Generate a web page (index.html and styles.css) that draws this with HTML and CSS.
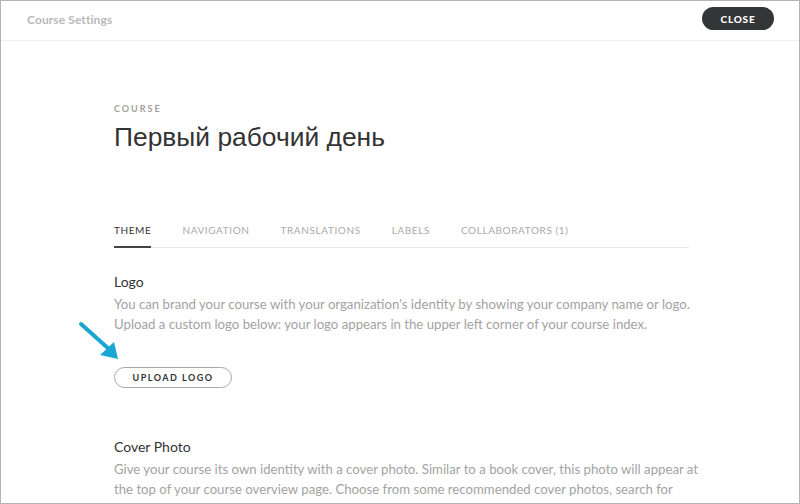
FILE: index.html
```html
<!DOCTYPE html>
<html>
<head>
<meta charset="utf-8">
<link rel="stylesheet" href="styles.css">
</head>
<body>
<div class="frame">
  <header class="topbar">
    <div class="topbar-title">Course Settings</div>
    <button class="close-btn">CLOSE</button>
  </header>
  <main class="content">
    <div class="eyebrow">COURSE</div>
    <h1 class="title">Первый рабочий день</h1>
    <nav class="tabs">
      <span class="tab active">THEME</span>
      <span class="tab">NAVIGATION</span>
      <span class="tab">TRANSLATIONS</span>
      <span class="tab">LABELS</span>
      <span class="tab">COLLABORATORS (1)</span>
    </nav>
    <section class="section">
      <h2 class="section-title">Logo</h2>
      <p class="section-text">You can brand your course with your organization's identity by showing your company name or logo. Upload a custom logo below: your logo appears in the upper left corner of your course index.</p>
      <div class="upload-wrap">
        <svg class="arrow" width="44" height="42" viewBox="0 0 44 42">
          <line x1="3" y1="3" x2="32" y2="29" stroke="#1ba5d3" stroke-width="4" stroke-linecap="round"/>
          <polygon points="40,38 22,34 36,21" fill="#1ba5d3"/>
        </svg>
        <button class="upload-btn">UPLOAD LOGO</button>
      </div>
    </section>
    <section class="section cover">
      <h2 class="section-title">Cover Photo</h2>
      <p class="section-text">Give your course its own identity with a cover photo. Similar to a book cover, this photo will appear at the top of your course overview page. Choose from some recommended cover photos, search for</p>
    </section>
  </main>
</div>
</body>
</html>
```
FILE: styles.css
```css
* { box-sizing: border-box; }
html, body { margin: 0; padding: 0; background: #fff; }
body { font-family: Lato, "Open Sans", sans-serif; color: #333; }
.frame {
  width: 800px;
  height: 504px;
  border: 1px solid #b4b4b4;
  overflow: hidden;
  background: #fff;
}
.topbar {
  height: 40px;
  border-bottom: 1px solid #efefef;
  display: flex;
  align-items: center;
  justify-content: space-between;
  padding: 0 25px 2px 26px;
}
.topbar-title {
  font-size: 12px;
  font-weight: 700;
  color: #b9b9b9;
  letter-spacing: 0.1px;
}
.close-btn {
  background: #343536;
  color: #fff;
  border: none;
  border-radius: 12px;
  height: 23px;
  width: 72px;
  font-family: Lato, sans-serif;
  font-size: 10px;
  font-weight: 900;
  letter-spacing: 0.8px;
  padding: 0;
  margin-top: -2px;
}
.content {
  padding: 62px 0 0 113px;
  width: 702px;
}
.eyebrow {
  font-size: 9px;
  font-weight: 700;
  letter-spacing: 2px;
  color: #a0a0a0;
  line-height: 12px;
}
.title {
  margin: 4px 0 0 0;
  font-family: "Liberation Sans", Arial, sans-serif;
  font-size: 26.4px;
  font-weight: 400;
  line-height: 36px;
  color: #333;
}
.tabs {
  display: flex;
  gap: 31px;
  margin-top: 64px;
  width: 575px;
  border-bottom: 1px solid #e8e8e8;
}
.tab {
  font-size: 10px;
  letter-spacing: 0.6px;
  color: #aaa;
  padding: 5px 0 10px 0;
  line-height: 12px;
}
.tab.active {
  color: #333;
  border-bottom: 2px solid #444;
  margin-bottom: -1px;
}
.section { margin-top: 24px; }
.section-title {
  margin: 0;
  font-size: 14px;
  font-weight: 400;
  color: #333;
  line-height: 20px;
}
.section-text {
  margin: 2px 0 0 0;
  font-size: 13.2px;
  font-weight: 400;
  line-height: 20px;
  color: #a3a3a3;
}
.upload-wrap {
  position: relative;
  margin-top: 31px;
}
.arrow {
  position: absolute;
  left: -36px;
  top: -44px;
}
.upload-btn {
  background: #fff;
  border: 1px solid #a8a8a8;
  border-radius: 11px;
  height: 21px;
  width: 118px;
  padding: 0;
  font-family: Lato, sans-serif;
  font-size: 9px;
  font-weight: 700;
  letter-spacing: 1.5px;
  color: #333;
}
.section.cover { margin-top: 49px; }
```
